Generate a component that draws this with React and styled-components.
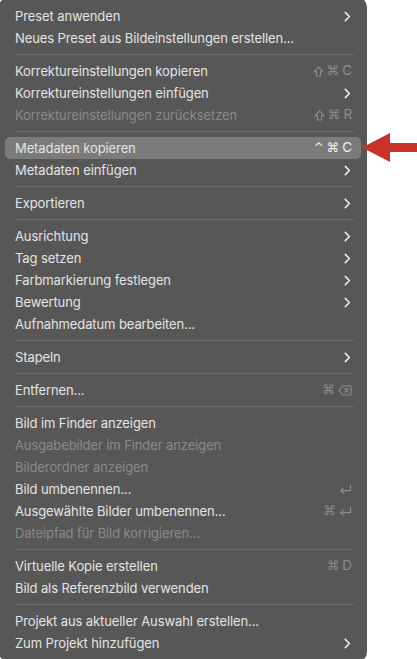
import React from "react";
import styled, { createGlobalStyle } from "styled-components";

const Global = createGlobalStyle`
  html, body { margin: 0; padding: 0; background: #ffffff; overflow: hidden; }
  body { font-family: Inter, "Noto Sans", "Liberation Sans", sans-serif; }
`;

const Stage = styled.div`
  position: relative;
  width: 417px;
  height: 659px;
  overflow: hidden;
`;

const Panel = styled.div`
  width: 368px;
  margin: -3px 0 0 -1px;
  padding: 8px 6px 8px 6px;
  box-sizing: border-box;
  background: #575757;
  border-radius: 10px;
  display: flex;
  flex-direction: column;
`;

const Row = styled.div`
  height: 22px;
  display: flex;
  align-items: center;
  padding: 0 9px 0 10px;
  border-radius: 5px;
  background: ${(p) => (p.$active ? "#7b7b7b" : "transparent")};
  color: ${(p) => (p.$disabled ? "#8a8a8a" : "#e4e4e4")};
  font-size: 13px;
  letter-spacing: -0.1px;
`;

const Label = styled.span`
  flex: 1;
  white-space: nowrap;
`;

const Shortcut = styled.span`
  display: flex;
  gap: 3px;
  align-items: center;
  color: ${(p) => (p.$active ? "#f2f2f2" : "#8c8c8c")};
`;

const Key = styled.span`
  font-family: ${(p) => (p.$letter ? 'Inter, "Noto Sans", sans-serif' : '"DejaVu Sans", sans-serif')};
  font-size: ${(p) => (p.$letter ? "13.5px" : "12.5px")};
  line-height: 1;
`;

const Glyph = styled.svg`
  display: block;
  fill: none;
  stroke: currentColor;
  stroke-width: 1.1;
  stroke-linejoin: round;
  stroke-linecap: round;
`;

const Sep = styled.div`
  height: 11px;
  display: flex;
  align-items: center;
  padding: 0 7px 0 10px;
  &::after {
    content: "";
    flex: 1;
    height: 1px;
    background: #6b6b6b;
  }
`;

const Arrow = styled.svg`
  position: absolute;
  left: 361px;
  top: 132px;
`;

const Chevron = () => (
  <svg width="7" height="11" viewBox="0 0 7 11" style={{ marginRight: 1 }}>
    <path d="M1.3 1.4 L5.4 5.5 L1.3 9.6" fill="none" stroke="#e8e8e8" strokeWidth="1.6" strokeLinecap="round" strokeLinejoin="round" />
  </svg>
);

const ShiftIcon = () => (
  <Glyph width="11" height="11" viewBox="0 0 11 11">
    <path d="M5.5 1 L10 5.6 H7.5 V10 H3.5 V5.6 H1 Z" />
  </Glyph>
);

const ReturnIcon = () => (
  <Glyph width="13" height="11" viewBox="0 0 13 11">
    <path d="M11.5 1.2 V6.6 H1.8" />
    <path d="M4.4 4 L1.8 6.6 L4.4 9.2" />
  </Glyph>
);

const DeleteIcon = () => (
  <Glyph width="14" height="11" viewBox="0 0 14 11">
    <path d="M4.6 1 H12.6 Q13 1 13 1.4 V9.6 Q13 10 12.6 10 H4.6 L1 5.5 Z" />
    <path d="M6.6 3.6 L10.2 7.2 M10.2 3.6 L6.6 7.2" />
  </Glyph>
);

const renderKey = (k, j) => {
  if (k === "shift") return <ShiftIcon key={j} />;
  if (k === "return") return <ReturnIcon key={j} />;
  if (k === "delete") return <DeleteIcon key={j} />;
  return (
    <Key key={j} $letter={/^[A-Z]$/.test(k)}>
      {k}
    </Key>
  );
};

const items = [
  { t: "Preset anwenden", sub: true },
  { t: "Neues Preset aus Bildeinstellungen erstellen..." },
  "sep",
  { t: "Korrektureinstellungen kopieren", keys: ["shift", "⌘", "C"] },
  { t: "Korrektureinstellungen einfügen", sub: true },
  { t: "Korrektureinstellungen zurücksetzen", disabled: true, keys: ["shift", "⌘", "R"] },
  "sep",
  { t: "Metadaten kopieren", active: true, keys: ["^", "⌘", "C"] },
  { t: "Metadaten einfügen", sub: true },
  "sep",
  { t: "Exportieren", sub: true },
  "sep",
  { t: "Ausrichtung", sub: true },
  { t: "Tag setzen", sub: true },
  { t: "Farbmarkierung festlegen", sub: true },
  { t: "Bewertung", sub: true },
  { t: "Aufnahmedatum bearbeiten..." },
  "sep",
  { t: "Stapeln", sub: true },
  "sep",
  { t: "Entfernen...", keys: ["⌘", "delete"] },
  "sep",
  { t: "Bild im Finder anzeigen" },
  { t: "Ausgabebilder im Finder anzeigen", disabled: true },
  { t: "Bilderordner anzeigen", disabled: true },
  { t: "Bild umbenennen...", keys: ["return"] },
  { t: "Ausgewählte Bilder umbenennen...", keys: ["⌘", "return"] },
  { t: "Dateipfad für Bild korrigieren...", disabled: true },
  "sep",
  { t: "Virtuelle Kopie erstellen", keys: ["⌘", "D"] },
  { t: "Bild als Referenzbild verwenden" },
  "sep",
  { t: "Projekt aus aktueller Auswahl erstellen..." },
  { t: "Zum Projekt hinzufügen", sub: true },
];

export default function App() {
  return (
    <Stage>
      <Global />
      <Panel>
        {items.map((it, i) =>
          it === "sep" ? (
            <Sep key={i} />
          ) : (
            <Row key={i} $active={it.active} $disabled={it.disabled}>
              <Label>{it.t}</Label>
              {it.sub && <Chevron />}
              {it.keys && <Shortcut $active={it.active}>{it.keys.map(renderKey)}</Shortcut>}
            </Row>
          )
        )}
      </Panel>
      <Arrow width="56" height="32" viewBox="0 0 56 32">
        <path d="M1 15.5 L29 1 L29 11 L56 11 L56 20 L29 20 L29 30 Z" fill="#c9322b" />
      </Arrow>
    </Stage>
  );
}
